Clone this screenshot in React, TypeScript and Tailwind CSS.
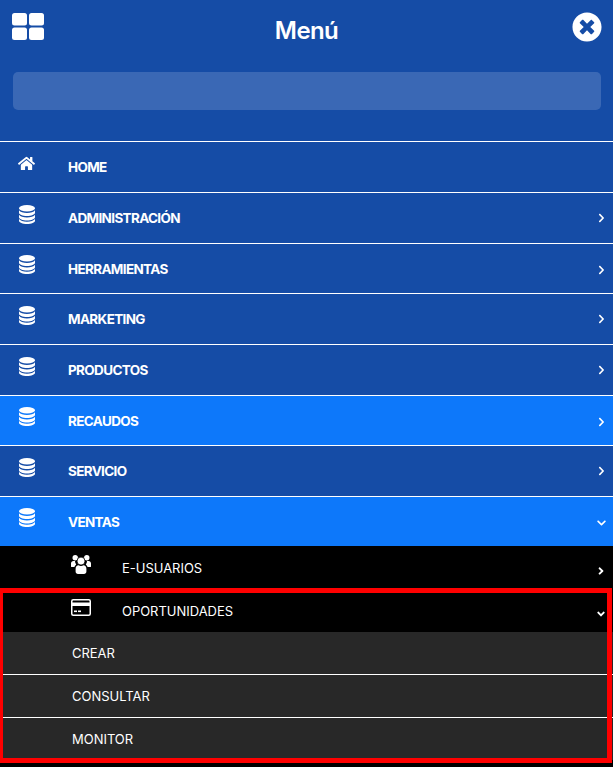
import { FaHome, FaTimesCircle, FaChevronRight, FaChevronDown, FaAngleRight, FaAngleDown } from "react-icons/fa";

const rows = [
  { label: "HOME", h: "h-[51px]", bg: "", home: true, nudge: "" },
  { label: "ADMINISTRACIÓN", h: "h-[51px]", bg: "", nudge: "" },
  { label: "HERRAMIENTAS", h: "h-[50px]", bg: "", nudge: "pt-[2px]" },
  { label: "MARKETING", h: "h-[51px]", bg: "", nudge: "" },
  { label: "PRODUCTOS", h: "h-[51px]", bg: "", nudge: "" },
  { label: "RECAUDOS", h: "h-[50px]", bg: "bg-[#0d78fa]", nudge: "pt-[2px]" },
  { label: "SERVICIO", h: "h-[51px]", bg: "", nudge: "" },
];

function DatabaseIcon() {
  return (
    <svg width="16" height="19" viewBox="0 0 16 19" fill="#fff">
      <ellipse cx="8" cy="3.2" rx="8" ry="3.2" />
      <path d="M0 5.3C1.2 7 4.3 7.9 8 7.9s6.8-.9 8-2.6v2.5c0 1.8-3.6 3.2-8 3.2S0 9.6 0 7.8z" />
      <path d="M0 9.8c1.2 1.7 4.3 2.6 8 2.6s6.8-.9 8-2.6v2.5c0 1.8-3.6 3.2-8 3.2s-8-1.4-8-3.2z" />
      <path d="M0 14.1c1.2 1.7 4.3 2.6 8 2.6s6.8-.9 8-2.6v1.7c0 1.8-3.6 3.2-8 3.2s-8-1.4-8-3.2z" />
    </svg>
  );
}

function UsersIcon() {
  return (
    <svg width="20" height="19" viewBox="0 0 20 19" fill="#fff">
      <circle cx="4.2" cy="2.8" r="2.7" />
      <circle cx="15.8" cy="2.8" r="2.7" />
      <path d="M0 11.5V8.6C0 7 1 6 2.4 6H4a5 5 0 0 0 1.2 3.4A4.6 4.6 0 0 0 3.4 12H1C.4 12 0 11.9 0 11.5z" />
      <path d="M20 11.5V8.6C20 7 19 6 17.6 6H16a5 5 0 0 1-1.2 3.4A4.6 4.6 0 0 1 16.6 12H19c.6 0 1-.1 1-.5z" />
      <circle cx="10" cy="6.1" r="4" stroke="#000" strokeWidth="0.8" />
      <path d="M4.6 16.5v-2.8c0-2 1.2-3.4 3-3.4.6.5 1.4.8 2.4.8s1.8-.3 2.4-.8c1.8 0 3 1.4 3 3.4v2.8c0 1.5-1 2.5-2.4 2.5H7c-1.4 0-2.4-1-2.4-2.5z" />
    </svg>
  );
}

function CardIcon() {
  return (
    <svg width="20" height="17" viewBox="0 0 20 17">
      <rect x="0.75" y="0.75" width="18.5" height="15.5" rx="1.5" fill="none" stroke="#fff" strokeWidth="1.5" />
      <rect x="1" y="3.5" width="18" height="3.5" fill="#fff" />
      <rect x="3" y="11.5" width="3" height="1.6" fill="#fff" />
      <rect x="7" y="11.5" width="3" height="1.6" fill="#fff" />
    </svg>
  );
}

function Row({ label, h, bg, home, open, nudge }: { label: string; h: string; bg: string; home?: boolean; open?: boolean; nudge: string }) {
  return (
    <div className={`flex ${h} items-center border-t border-white ${bg}`}>
      <span className="flex w-[68px] justify-center pr-[15px] pb-[8px]">
        <span className="flex w-[53px] justify-center">
          {home ? <FaHome className="text-[17px]" /> : <DatabaseIcon />}
        </span>
      </span>
      <span className={`flex-1 text-[13.5px] font-bold tracking-[-0.65px] ${nudge}`}>{label}</span>
      {!home && (
        <span className={`mr-[7px] flex w-[9px] justify-center ${nudge}`}>
          {open ? <FaChevronDown className="text-[10px]" /> : <FaChevronRight className="text-[10px]" />}
        </span>
      )}
    </div>
  );
}

function SubRow({ label, icon, open }: { label: string; icon: React.ReactNode; open?: boolean }) {
  return (
    <div className="flex h-[43px] items-center bg-black">
      <span className="flex w-[122px] justify-start pb-[7px] pl-[71px]">{icon}</span>
      <span className="flex-1 pt-[2px] text-[13px] tracking-[-0.02px]">{label}</span>
      <span className="mr-[7px] flex w-[10px] justify-center pt-[7px]">
        {open ? <FaAngleDown className="text-[12px]" /> : <FaAngleRight className="text-[12px]" />}
      </span>
    </div>
  );
}

function Leaf({ label }: { label: string }) {
  return (
    <div className="flex h-[42px] items-center bg-[#282828] pt-[2px] pl-[72px] text-[13px] tracking-[-0.02px]">
      {label}
    </div>
  );
}

export default function App() {
  return (
    <div className="relative h-[767px] w-[613px] overflow-hidden bg-[#154ca6] text-white [font-family:Inter,'Liberation_Sans',sans-serif]">
      <header className="relative h-[72px]">
        <svg className="absolute left-[12px] top-[13px]" width="32" height="27" viewBox="0 0 32 27" fill="#fff">
          <rect x="0" y="0" width="15" height="12.5" rx="2.5" />
          <rect x="17" y="0" width="15" height="12.5" rx="2.5" />
          <rect x="0" y="14.5" width="15" height="12.5" rx="2.5" />
          <rect x="17" y="14.5" width="15" height="12.5" rx="2.5" />
        </svg>
        <h1 className="pt-[15px] text-center text-[24px] leading-[32px] font-semibold tracking-[-0.6px]">Menú</h1>
        <span className="absolute left-[572px] top-[12px] flex h-[30px] w-[30px] items-center justify-center">
          <FaTimesCircle className="text-[30px]" />
        </span>
      </header>
      <div className="ml-[13px] h-[38px] w-[588px] rounded-[5px] bg-[#3a68b5]" />
      <nav className="mt-[31px]">
        {rows.map((r) => (
          <Row key={r.label} {...r} />
        ))}
        <Row label="VENTAS" h="h-[50px]" bg="bg-[#0d78fa]" open nudge="pt-[2px]" />
        <SubRow label="E-USUARIOS" icon={<UsersIcon />} />
        <SubRow label="OPORTUNIDADES" icon={<CardIcon />} open />
        <Leaf label="CREAR" />
        <div className="h-px bg-white" />
        <Leaf label="CONSULTAR" />
        <div className="h-px bg-white" />
        <Leaf label="MONITOR" />
        <div className="h-[8px] bg-black" />
      </nav>
      <div className="pointer-events-none absolute left-0 top-[588px] h-[175px] w-[612px] border-t-[5px] border-r-[5px] border-b-[5px] border-l-[3px] border-[#ff0000]" />
    </div>
  );
}
